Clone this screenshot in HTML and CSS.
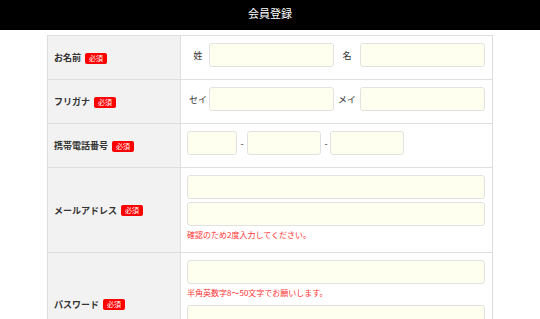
FILE: index.html
```html
<!DOCTYPE html>
<html lang="ja">
<head>
    <meta charset="UTF-8">
    <meta name="viewport" content="width=device-width, initial-scale=1.0">
    <title>会員登録</title>
    <link rel="stylesheet" href="styles.css">
</head>
<body>
    <div class="header">会員登録</div>

    <table class="form-table">
        <tr>
            <th><span class="label">お名前</span><span class="req">必須</span></th>
            <td>
                <div class="pair">
                    <span class="sub">姓</span>
                    <input type="text">
                    <span class="sub">名</span>
                    <input type="text">
                </div>
            </td>
        </tr>
        <tr>
            <th><span class="label">フリガナ</span><span class="req">必須</span></th>
            <td>
                <div class="pair">
                    <span class="sub">セイ</span>
                    <input type="text">
                    <span class="sub">メイ</span>
                    <input type="text">
                </div>
            </td>
        </tr>
        <tr>
            <th><span class="label">携帯電話番号</span><span class="req">必須</span></th>
            <td>
                <div class="tel">
                    <input type="text" class="tel-1">
                    <span class="dash">-</span>
                    <input type="text" class="tel-2">
                    <span class="dash">-</span>
                    <input type="text" class="tel-3">
                </div>
            </td>
        </tr>
        <tr>
            <th><span class="label">メールアドレス</span><span class="req">必須</span></th>
            <td>
                <input type="text" class="full">
                <input type="text" class="full">
                <p class="note">確認のため2度入力してください。</p>
            </td>
        </tr>
        <tr>
            <th><span class="label">パスワード</span><span class="req">必須</span></th>
            <td>
                <input type="password" class="full">
                <p class="note">半角英数字8～50文字でお願いします。</p>
                <input type="password" class="full">
                <p class="note">確認のため2度入力してください。</p>
            </td>
        </tr>
    </table>
</body>
</html>
```

FILE: styles.css
```css
body {
    margin: 0;
    padding: 0;
    background-color: #fff;
    font-family: "Noto Sans CJK JP", "Liberation Sans", sans-serif;
    color: #333;
}

.header {
    height: 30px;
    line-height: 26px;
    background-color: #000;
    color: #fff;
    text-align: center;
    font-size: 11px;
}

.form-table {
    width: 446px;
    margin: 5px auto 0;
    border-collapse: collapse;
    border: 1px solid #dedede;
}

.form-table th,
.form-table td {
    border: 1px solid #dedede;
}

.form-table th {
    width: 126px;
    background-color: #f2f2f2;
    text-align: left;
    padding: 0 0 0 6px;
    font-size: 9px;
    font-weight: bold;
    white-space: nowrap;
}

.form-table td {
    padding: 7px 7px 11px 6px;
    vertical-align: top;
}

.label {
    vertical-align: middle;
}

.req {
    display: inline-block;
    margin-left: 4px;
    padding: 0 4px;
    height: 11px;
    line-height: 11px;
    background-color: #f00;
    color: #fff;
    font-size: 7px;
    font-weight: normal;
    border-radius: 2px;
    vertical-align: middle;
}

input {
    display: block;
    box-sizing: border-box;
    height: 24px;
    margin: 0;
    border: 1px solid #e2e2e2;
    border-radius: 3px;
    background-color: #fffff0;
    font-size: 10px;
}

.pair {
    display: grid;
    grid-template-columns: 22px 1fr 26px 1fr;
    align-items: center;
    padding-bottom: 1px;
}

.pair input {
    width: 100%;
}

.sub {
    text-align: center;
    font-size: 9px;
    color: #333;
}

.tel {
    display: flex;
    align-items: center;
    padding-bottom: 1px;
}

.tel-1 {
    width: 50px;
}

.tel-2,
.tel-3 {
    width: 74px;
}

.dash {
    width: 10px;
    text-align: center;
    font-size: 9px;
}

.tel .tel-3 {
    margin-left: -1px;
}

.full {
    width: 100%;
    margin-bottom: 3px;
}

.note {
    margin: 0 0 6px;
    font-size: 8px;
    line-height: 12px;
    color: #f33;
}

.note:last-child {
    margin-bottom: 0;
}
```
